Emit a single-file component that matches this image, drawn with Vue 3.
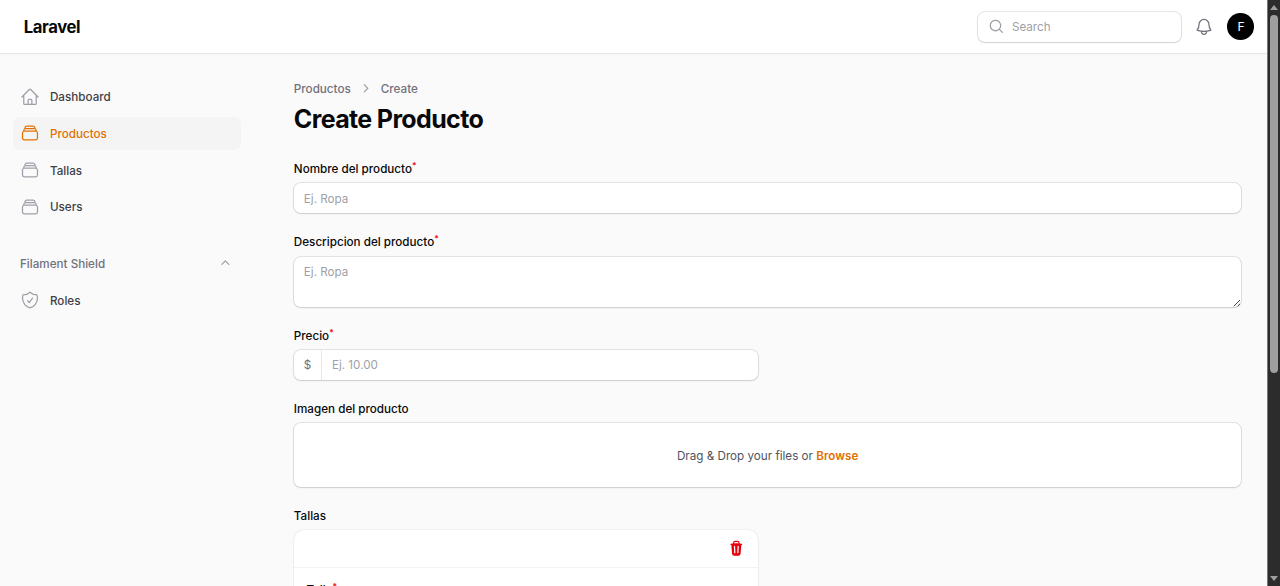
<script setup>
const ICONS = {
  home: 'm2.25 12 8.954-8.955c.44-.439 1.152-.439 1.591 0L21.75 12M4.5 9.75v10.125c0 .621.504 1.125 1.125 1.125H9.75v-4.875c0-.621.504-1.125 1.125-1.125h2.25c.621 0 1.125.504 1.125 1.125V21h4.125c.621 0 1.125-.504 1.125-1.125V9.75M8.25 21h8.25',
  stack: 'M6 6.878V6a2.25 2.25 0 0 1 2.25-2.25h7.5A2.25 2.25 0 0 1 18 6v.878m-12 0c.235-.083.487-.128.75-.128h10.5c.263 0 .515.045.75.128m-12 0A2.25 2.25 0 0 0 4.5 9v.878m13.5-3A2.25 2.25 0 0 1 19.5 9v.878m0 0a2.246 2.246 0 0 0-.75-.128H5.25c-.263 0-.515.045-.75.128m15 0A2.25 2.25 0 0 1 21 12v6a2.25 2.25 0 0 1-2.25 2.25H5.25A2.25 2.25 0 0 1 3 18v-6c0-.98.626-1.813 1.5-2.122',
  shield: 'M9 12.75 11.25 15 15 9.75m-3-7.036A11.959 11.959 0 0 1 3.598 6 11.99 11.99 0 0 0 3 9.749c0 5.592 3.824 10.29 9 11.623 5.176-1.332 9-6.03 9-11.622 0-1.31-.21-2.571-.598-3.751h-.152c-3.196 0-6.1-1.248-8.25-3.285Z',
}

const groups = [
  {
    items: [
      { label: 'Dashboard', icon: 'home' },
      { label: 'Productos', icon: 'stack', active: true },
      { label: 'Tallas', icon: 'stack' },
      { label: 'Users', icon: 'stack' },
    ],
  },
  { title: 'Filament Shield', items: [{ label: 'Roles', icon: 'shield' }] },
]
</script>

<template>
  <div class="window">
    <div class="page">
      <header class="topbar">
        <div class="logo">Laravel</div>
        <div class="tools">
          <label class="control search">
            <svg viewBox="0 0 20 20" class="mini"><path d="M9 3.5a5.5 5.5 0 1 0 0 11 5.5 5.5 0 0 0 0-11ZM2 9a7 7 0 1 1 12.452 4.391l3.328 3.329a.75.75 0 1 1-1.06 1.06l-3.329-3.328A7 7 0 0 1 2 9Z" /></svg>
            <input type="text" placeholder="Search" />
          </label>
          <svg viewBox="0 0 24 24" class="outline bell"><path d="M14.857 17.082a23.848 23.848 0 0 0 5.454-1.31A8.967 8.967 0 0 1 18 9.75V9A6 6 0 0 0 6 9v.75a8.967 8.967 0 0 1-2.312 6.022c1.733.64 3.56 1.085 5.455 1.31m5.714 0a24.255 24.255 0 0 1-5.714 0m5.714 0a3 3 0 1 1-5.714 0" /></svg>
          <div class="avatar">F</div>
        </div>
      </header>

      <div class="body">
        <nav class="sidebar">
          <section v-for="(group, i) in groups" :key="i" class="group">
            <div v-if="group.title" class="group-title">
              <span>{{ group.title }}</span>
              <svg viewBox="0 0 20 20" class="mini"><path d="M9.47 6.47a.75.75 0 0 1 1.06 0l4.25 4.25a.75.75 0 1 1-1.06 1.06L10 8.06l-3.72 3.72a.75.75 0 0 1-1.06-1.06l4.25-4.25Z" /></svg>
            </div>
            <a v-for="item in group.items" :key="item.label" class="item" :class="{ active: item.active }">
              <svg viewBox="0 0 24 24" class="outline"><path :d="ICONS[item.icon]" /></svg>
              <span>{{ item.label }}</span>
            </a>
          </section>
        </nav>

        <main class="main">
          <div class="crumbs">
            <span>Productos</span>
            <svg viewBox="0 0 20 20" class="mini"><path d="M8.22 5.22a.75.75 0 0 1 1.06 0l4.25 4.25a.75.75 0 0 1 0 1.06l-4.25 4.25a.75.75 0 0 1-1.06-1.06L11.94 10 8.22 6.28a.75.75 0 0 1 0-1.06Z" /></svg>
            <span>Create</span>
          </div>
          <h1>Create Producto</h1>

          <form class="form">
            <div class="field">
              <div class="label">Nombre del producto<sup>*</sup></div>
              <div class="control"><input type="text" placeholder="Ej. Ropa" /></div>
            </div>
            <div class="field">
              <div class="label">Descripcion del producto<sup>*</sup></div>
              <div class="control area">
                <textarea placeholder="Ej. Ropa"></textarea>
                <svg class="grip" viewBox="0 0 8 8"><path d="M0.8 7.2 7 1M4.6 7.2 7 4.8" /></svg>
              </div>
            </div>
            <div class="field half">
              <div class="label">Precio<sup>*</sup></div>
              <div class="control">
                <span class="prefix">$</span>
                <input type="text" placeholder="Ej. 10.00" />
              </div>
            </div>
            <div class="field">
              <div class="label">Imagen del producto</div>
              <div class="control drop"><span>Drag &amp; Drop your files or <b>Browse</b></span></div>
            </div>
            <div class="field half">
              <div class="label">Tallas</div>
              <div class="card">
                <div class="card-head">
                  <svg viewBox="0 0 20 20" class="mini trash"><path fill-rule="evenodd" d="M8.75 1A2.75 2.75 0 0 0 6 3.75v.443c-.795.077-1.584.176-2.365.298a.75.75 0 1 0 .23 1.482l.149-.022.841 10.518A2.75 2.75 0 0 0 7.596 19h4.807a2.75 2.75 0 0 0 2.742-2.53l.841-10.52.149.023a.75.75 0 0 0 .23-1.482A41.03 41.03 0 0 0 14 4.193V3.75A2.75 2.75 0 0 0 11.25 1h-2.5ZM10 4c.84 0 1.673.025 2.5.075V3.75c0-.69-.56-1.25-1.25-1.25h-2.5c-.69 0-1.25.56-1.25 1.25v.325C8.327 4.025 9.16 4 10 4ZM8.58 7.72a.75.75 0 0 0-1.5.06l.3 7.5a.75.75 0 1 0 1.5-.06l-.3-7.5Zm4.34.06a.75.75 0 1 0-1.5-.06l-.3 7.5a.75.75 0 1 0 1.5.06l.3-7.5Z" /></svg>
                </div>
                <div class="card-body"><div class="label">Talla<sup>*</sup></div></div>
              </div>
            </div>
          </form>
        </main>
      </div>
    </div>

    <div class="scrollbar">
      <svg viewBox="0 0 8 5" class="arrow"><path d="M4 0 8 5H0Z" /></svg>
      <div class="thumb"></div>
      <svg viewBox="0 0 8 5" class="arrow"><path d="M0 0H8L4 5Z" /></svg>
    </div>
  </div>
</template>

<style>
html {
  font-size: 13.3333px;
}
body {
  margin: 0;
  overflow: hidden;
}
</style>

<style scoped>
* {
  box-sizing: border-box;
}
.window {
  display: flex;
  height: 586px;
  overflow: hidden;
  background: #fafafa;
  color: #09090b;
  font: 400 0.875rem/1.25rem Inter, sans-serif;
}
.page {
  flex: 1;
  min-width: 0;
}
svg {
  display: block;
  flex: none;
}
.mini {
  width: 1.25rem;
  height: 1.25rem;
  fill: #9f9fa9;
}
.outline {
  width: 1.5rem;
  height: 1.5rem;
  fill: none;
  stroke: #9f9fa9;
  stroke-width: 1.5;
  stroke-linecap: round;
  stroke-linejoin: round;
}
.topbar {
  display: flex;
  align-items: center;
  justify-content: space-between;
  height: 4rem;
  padding: 0 13px 0 23.8px;
  background: #fff;
  box-shadow: 0 0 0 1px rgba(9, 9, 11, 0.05), 0 1px 2px rgba(0, 0, 0, 0.04);
}
.logo {
  padding-top: 2px;
  font-size: 1.25rem;
  line-height: 1.75rem;
  font-weight: 700;
  letter-spacing: -0.025em;
}
.tools {
  display: flex;
  align-items: center;
  gap: 1rem;
}
.control {
  display: flex;
  height: 2.25rem;
  border-radius: 0.5rem;
  background: #fff;
  box-shadow: 0 0 0 0.8px rgba(9, 9, 11, 0.12), 0 1px 2px rgba(0, 0, 0, 0.1);
}
input,
textarea {
  flex: 1;
  min-width: 0;
  margin: 0;
  padding: 2px 0.75rem 0;
  border: 0;
  outline: 0;
  background: none;
  color: inherit;
  font: inherit;
}
textarea {
  padding-top: 0.375rem;
  line-height: 1.5rem;
  resize: none;
  overflow: hidden;
}
input::placeholder,
textarea::placeholder {
  color: #9f9fa9;
  opacity: 1;
}
.search {
  align-items: center;
  width: 15.25rem;
  margin-right: -0.6px;
  padding-left: 0.75rem;
}
.search input {
  padding-left: 0.55rem;
}
.bell {
  stroke: #71717b;
}
.avatar {
  display: grid;
  place-items: center;
  width: 2rem;
  height: 2rem;
  padding: 1px 0 0 1px;
  border-radius: 50%;
  background: #000;
  color: #fff;
  font-size: 0.92rem;
}
.body {
  display: flex;
}
.sidebar {
  display: flex;
  flex-direction: column;
  gap: 1.75rem;
  width: 20rem;
  padding: 2rem 1.95rem 0 1rem;
}
.group {
  display: flex;
  flex-direction: column;
  gap: 0.25rem;
}
.item,
.group-title {
  display: flex;
  align-items: center;
  gap: 0.75rem;
  height: 2.5rem;
  padding: 0 0.5rem;
  border-radius: 0.5rem;
  color: #3f3f46;
  font-weight: 500;
}
.item span,
.group-title span,
.drop span {
  padding-top: 2px;
}
.group-title {
  justify-content: space-between;
  color: #71717b;
}
.active {
  background: #f4f4f5;
  color: #e17100;
}
.active .outline {
  stroke: #e17100;
}
.main {
  flex: 1;
  padding: 2rem 25.6px 0 27.2px;
}
.crumbs {
  display: flex;
  gap: 0.5rem;
  height: 1.25rem;
  color: #71717b;
  font-weight: 500;
}
.crumbs span {
  padding-top: 1px;
}
h1 {
  height: 2.25rem;
  margin: 0.5rem 0 2rem;
  padding-top: 1px;
  font-size: 1.875rem;
  line-height: 2.25rem;
  font-weight: 700;
  letter-spacing: -0.025em;
}
.form {
  display: flex;
  flex-direction: column;
  gap: 1.5rem;
}
.field {
  display: flex;
  flex-direction: column;
  gap: 0.5rem;
}
.half {
  width: 34.8rem;
}
.label {
  height: 1.25rem;
  padding-top: 1px;
  font-weight: 500;
}
sup {
  color: #e7000b;
  font-size: 75%;
  line-height: 0;
  vertical-align: 0.5em;
}
.area {
  position: relative;
  height: 3.75rem;
}
.grip {
  position: absolute;
  right: 0;
  bottom: 0;
  width: 8px;
  height: 8px;
  fill: none;
  stroke: #444;
  stroke-width: 1;
}
.prefix {
  display: flex;
  align-items: center;
  padding: 1px 0.72rem 0 0.75rem;
  border-right: 1px solid #e8e8ea;
  color: #71717b;
}
.drop {
  align-items: center;
  justify-content: center;
  height: 4.8rem;
  color: #52525c;
}
.drop b {
  color: #e17100;
  font-weight: 600;
}
.card {
  height: 10rem;
  border-radius: 0.75rem;
  background: #fff;
  box-shadow: 0 0 0 0.8px rgba(9, 9, 11, 0.05), 0 1px 2px rgba(0, 0, 0, 0.05);
}
.card-head {
  display: flex;
  align-items: center;
  justify-content: flex-end;
  height: 2.8rem;
  padding: 0 1rem;
  border-bottom: 1px solid #f3f3f4;
}
.card-body {
  padding: 1rem 0.95rem;
}
.trash {
  fill: #e7000b;
}
.scrollbar {
  display: flex;
  flex-direction: column;
  align-items: center;
  width: 13px;
  padding: 5px 1px 5px 0;
  border-left: 1px solid #777;
  background: #2c2c2c;
}
.arrow {
  width: 8px;
  height: 5px;
  fill: #9f9f9f;
}
.thumb {
  width: 8px;
  height: 358px;
  margin: 5px 0 auto;
  border-radius: 4px;
  background: #9f9f9f;
}
</style>
